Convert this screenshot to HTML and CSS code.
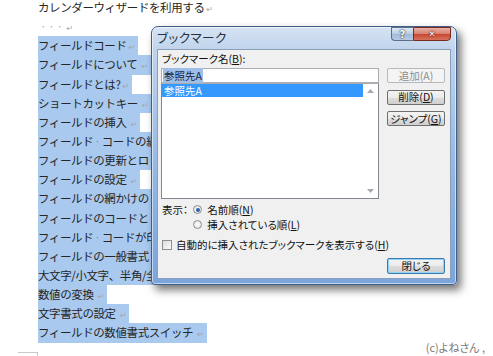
FILE: index.html
```html
<!DOCTYPE html>
<html lang="ja">
<head>
    <meta charset="UTF-8">
    <title>ブックマーク</title>
    <link rel="stylesheet" href="styles.css">
</head>
<body>
    <div class="doc">
        <p class="line">カレンダーウィザードを利用する<span class="mark">↵</span></p>
        <p class="line"><span class="dots">· · ·</span><span class="mark">↵</span></p>
        <p class="line"><span class="sel">フィールドコード<span class="mark">↵</span></span></p>
        <p class="line"><span class="sel">フィールドについて <span class="mark">↵</span></span></p>
        <p class="line"><span class="sel">フィールドとは?<span class="mark">↵</span></span></p>
        <p class="line"><span class="sel">ショートカットキー <span class="mark">↵</span></span></p>
        <p class="line"><span class="sel">フィールドの挿入 <span class="mark">↵</span></span></p>
        <p class="line"><span class="sel long">フィールド<span class="sp">·</span>コードの編</span></p>
        <p class="line"><span class="sel long">フィールドの更新とロ</span></p>
        <p class="line"><span class="sel">フィールドの設定 <span class="mark">↵</span></span></p>
        <p class="line"><span class="sel long">フィールドの網かけの</span></p>
        <p class="line"><span class="sel long">フィールドのコードと</span></p>
        <p class="line"><span class="sel long">フィールド<span class="sp">·</span>コードが印</span></p>
        <p class="line"><span class="sel long">フィールドの一般書式</span></p>
        <p class="line"><span class="sel long">大文字/小文字、半角/全</span></p>
        <p class="line"><span class="sel">数値の変換 <span class="mark">↵</span></span></p>
        <p class="line"><span class="sel">文字書式の設定 <span class="mark">↵</span></span></p>
        <p class="line"><span class="sel">フィールドの数値書式スイッチ <span class="mark">↵</span></span></p>
    </div>
    <div class="corner"></div>
    <div class="copy">(c)よねさん ,</div>

    <div class="dialog">
        <div class="titlebar">
            <span class="title">ブックマーク</span>
            <div class="caption-btns">
                <span class="cap help">?</span>
                <span class="cap close">✕</span>
            </div>
        </div>
        <div class="client">
            <div class="field-label">ブックマーク名(<u>B</u>):</div>
            <div class="main">
                <div class="left">
                    <div class="name-box"><span class="name-sel">参照先A</span></div>
                    <div class="list">
                        <div class="items">
                            <div class="item selected">参照先A</div>
                        </div>
                        <div class="scroll">
                            <svg width="7" height="4" viewBox="0 0 7 4"><path d="M0 4 L3.5 0 L7 4 Z" fill="#a8a8a8"/></svg>
                            <svg width="7" height="4" viewBox="0 0 7 4"><path d="M0 0 L3.5 4 L7 0 Z" fill="#a8a8a8"/></svg>
                        </div>
                    </div>
                </div>
                <div class="btns">
                    <button class="btn" disabled>追加(A)</button>
                    <button class="btn">削除(<u>D</u>)</button>
                    <button class="btn">ジャンプ(<u>G</u>)</button>
                </div>
            </div>
            <div class="options">
                <div class="show-row">
                    <span class="show-label">表示：</span>
                    <div class="radios">
                        <div class="radio"><span class="dot on"></span>名前順(<u>N</u>)</div>
                        <div class="radio"><span class="dot"></span>挿入されている順(<u>L</u>)</div>
                    </div>
                </div>
                <div class="check"><span class="box"></span>自動的に挿入されたブックマークを表示する(<u>H</u>)</div>
            </div>
            <div class="footer">
                <button class="btn default">閉じる</button>
            </div>
        </div>
    </div>
</body>
</html>
```

FILE: styles.css
```css
body {
    margin: 0;
    background: #fff;
    font-family: "Noto Sans CJK JP", "Noto Sans", sans-serif;
    color: #262626;
    overflow: hidden;
}
.doc {
    margin-top: -2px;
    padding-left: 38px;
    font-size: 11.5px;
    letter-spacing: -0.4px;
}
.line {
    margin: 0;
    height: 19.15px;
    line-height: 19.15px;
    white-space: nowrap;
}
.sel {
    display: inline-block;
    height: 19.15px;
    background: #a9c9ef;
    padding-right: 3px;
}
.sel.long {
    padding-right: 30px;
}
.mark {
    font-family: "DejaVu Sans", sans-serif;
    font-size: 8px;
    color: #a5a5a5;
    margin-left: 2px;
}
.dots {
    color: #b0b0b0;
    padding: 0 2px;
}
.sp {
    color: #8c9bb0;
    margin: 0 1px;
    letter-spacing: 0;
}
.corner {
    margin: 9px 0 0 18px;
    width: 19px;
    height: 6px;
    border-top: 1px solid #c9c9c9;
    border-right: 1px solid #c9c9c9;
}
.copy {
    position: absolute;
    right: 8px;
    bottom: 1px;
    font-size: 11px;
    color: #7a7a7a;
    font-feature-settings: "palt";
}

/* dialog */
.dialog {
    position: absolute;
    left: 151px;
    top: 26px;
    width: 306px;
    height: 259px;
    box-sizing: border-box;
    border: 1px solid #3f5f88;
    border-radius: 7px 7px 4px 4px;
    padding: 0 5px 5px;
    background: linear-gradient(#d6e4f3 0, #c0d4ec 22px, #91b5e3 60%, #7aa4dc 100%);
    box-shadow: 4px 5px 9px rgba(0, 0, 0, 0.55), inset 0 0 0 1px rgba(255, 255, 255, 0.55);
    display: flex;
    flex-direction: column;
    font-size: 10.5px;
    font-feature-settings: "palt";
    color: #111;
}
.titlebar {
    height: 22px;
    display: flex;
    align-items: flex-start;
}
.title {
    font-size: 12.5px;
    line-height: 20px;
    color: #24313f;
    padding-top: 1px;
    letter-spacing: 0.5px;
}
.caption-btns {
    margin-left: auto;
    display: flex;
}
.cap {
    height: 14px;
    box-sizing: border-box;
    border: 1px solid #5b6f8a;
    display: flex;
    align-items: center;
    justify-content: center;
    color: #fff;
    font-family: "DejaVu Sans", sans-serif;
    font-weight: bold;
}
.help {
    width: 22px;
    border-radius: 0 0 0 4px;
    border-right: none;
    background: linear-gradient(#dfe8f3, #b8cbe2 50%, #a3bad8 51%, #b6cae3);
    font-size: 10px;
    text-shadow: 0 0 1px #233, 0 0 2px #233;
}
.close {
    width: 38px;
    border-radius: 0 0 4px 0;
    border-color: #7a2b20;
    background: linear-gradient(#eab1a6, #d6806f 50%, #c8452e 51%, #d5735d);
    font-size: 9px;
    text-shadow: 0 0 1px #500, 0 0 2px #500;
}
.client {
    flex: 1;
    box-sizing: border-box;
    border: 1px solid #8b9fb9;
    background: #f0f0f0;
    padding: 2px 5px 0 3px;
    display: flex;
    flex-direction: column;
}
.field-label {
    line-height: 13px;
    margin: 0 0 3px 1px;
}
.main {
    display: flex;
    gap: 8px;
}
.left {
    width: 218px;
}
.name-box {
    height: 15px;
    box-sizing: border-box;
    border: 1px solid #abadb3;
    background: #fff;
    padding: 0 1px;
    line-height: 13px;
}
.name-sel {
    background: #9ebde7;
    color: #13263d;
    padding: 0 1px;
}
.list {
    height: 116px;
    box-sizing: border-box;
    border: 1px solid #828790;
    border-top-color: #abadb3;
    background: #fff;
    display: flex;
}
.items {
    flex: 1;
}
.item {
    height: 13px;
    line-height: 13px;
    padding-left: 2px;
}
.item.selected {
    background: #3399ff;
    color: #fff;
}
.scroll {
    width: 15px;
    display: flex;
    flex-direction: column;
    justify-content: space-between;
    align-items: center;
    padding: 5px 0 5px;
}
.btns {
    display: flex;
    flex-direction: column;
    gap: 6.5px;
}
.btn {
    width: 58px;
    height: 15px;
    padding: 0;
    box-sizing: border-box;
    border: 1px solid #707070;
    border-radius: 2px;
    background: linear-gradient(#f3f3f3, #ebebeb 50%, #dddddd 51%, #cfcfcf);
    font-family: inherit;
    font-size: 10.5px;
    font-feature-settings: "palt";
    line-height: 12px;
    color: #111;
}
.btn:disabled {
    border-color: #b4b9bd;
    background: #f4f4f4;
    color: #8d8d8d;
}
.options {
    margin-top: 3px;
}
.show-row {
    display: flex;
    padding-left: 1px;
}
.show-label {
    flex: none;
    white-space: nowrap;
    line-height: 15px;
    margin-right: 5px;
}
.radio {
    display: flex;
    align-items: center;
    height: 15px;
    white-space: nowrap;
}
.dot {
    flex: none;
    width: 9px;
    height: 9px;
    box-sizing: border-box;
    border-radius: 50%;
    border: 1px solid #8e8f8f;
    background: radial-gradient(#ffffff, #dcdcdc);
    margin-right: 5px;
    display: flex;
    align-items: center;
    justify-content: center;
}
.dot.on::after {
    content: "";
    width: 4px;
    height: 4px;
    border-radius: 50%;
    background: #2a62b0;
}
.check {
    display: flex;
    align-items: center;
    height: 15px;
    margin-top: 5px;
    padding-left: 1px;
    white-space: nowrap;
}
.box {
    flex: none;
    width: 10px;
    height: 10px;
    box-sizing: border-box;
    border: 1px solid #8e8f8f;
    background: linear-gradient(135deg, #dcdcdc, #fbfbfb);
    margin-right: 4px;
}
.footer {
    display: flex;
    justify-content: flex-end;
    margin-top: 6px;
}
.btn.default {
    height: 16px;
    border-color: #3d7bad;
    box-shadow: inset 0 0 0 1px #8fd2f5;
}
```
